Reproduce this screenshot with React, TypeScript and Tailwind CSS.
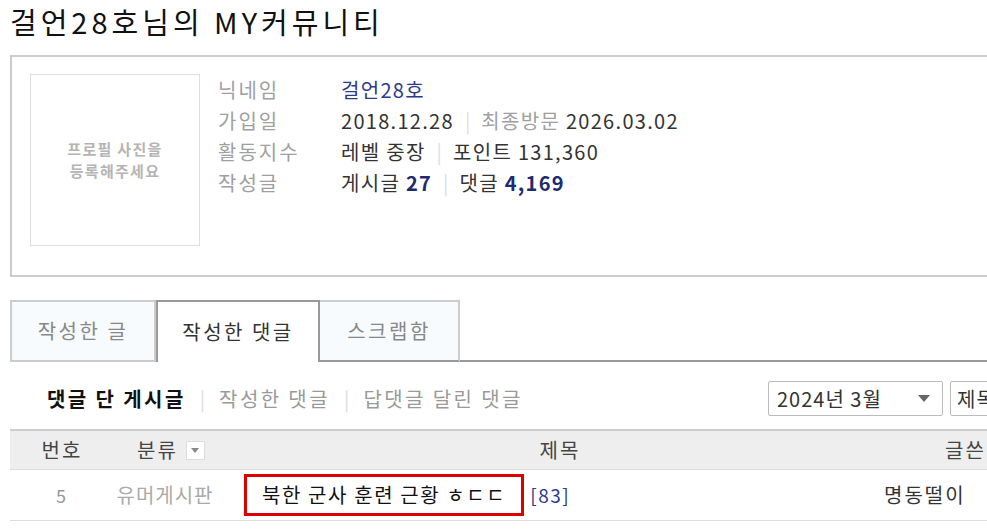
export default function App() {
  const sep = <span className="mx-[11px] tracking-normal text-[#ddd]">|</span>;
  const navSep = <span className="mx-[14px] tracking-normal text-[#ddd]">|</span>;
  return (
    <div
      className="w-[987px] h-[530px] overflow-hidden bg-white pl-[10px] text-[20px] text-[#333]"
      style={{ fontFamily: '"Noto Sans CJK KR", "Noto Sans", sans-serif' }}
    >
      {/* page title */}
      <h1 className="h-[55px] text-[29px] leading-[42px] font-normal tracking-[4px] text-[#111]">
        걸언28호님의 MY커뮤니티
      </h1>

      {/* profile */}
      <div className="flex w-[1000px] h-[222px] border-2 border-[#ccc] pl-[18px] pt-[17px]">
        <div className="flex h-[172px] w-[170px] flex-col items-center justify-center border border-[#ddd] text-[15px] font-bold leading-[22px] tracking-[1.3px] text-[#b4b4b4]">
          <span>프로필 사진을</span>
          <span>등록해주세요</span>
        </div>
        <div className="ml-[18px] leading-[31px] tracking-[1.3px]">
          <div className="flex">
            <span className="w-[123px] tracking-[2px] text-[#a0a0a0]">닉네임</span>
            <span className="text-[#2b3a8c]">걸언28호</span>
          </div>
          <div className="flex">
            <span className="w-[123px] tracking-[2px] text-[#a0a0a0]">가입일</span>
            <span>
              2018.12.28{sep}
              <span className="text-[#a0a0a0]">최종방문</span> 2026.03.02
            </span>
          </div>
          <div className="flex">
            <span className="w-[123px] tracking-[2px] text-[#a0a0a0]">활동지수</span>
            <span>
              레벨 중장{sep}포인트 131,360
            </span>
          </div>
          <div className="flex">
            <span className="w-[123px] tracking-[2px] text-[#a0a0a0]">작성글</span>
            <span>
              게시글 <b className="text-[#1f2a70]">27</b>
              {sep}댓글 <b className="text-[#1f2a70]">4,169</b>
            </span>
          </div>
        </div>
      </div>

      {/* tabs */}
      <div className="mt-[23px] flex h-[62px] w-[1000px] tracking-[2.5px]">
        <div className="flex w-[146px] items-center justify-center border-2 border-[#ccc] bg-[#f7fbfd] text-[#888]">
          작성한 글
        </div>
        <div className="flex w-[164px] items-center justify-center border-2 border-b-0 border-[#999] bg-white text-[#333]">
          작성한 댓글
        </div>
        <div className="flex w-[140px] items-center justify-center border-2 border-l-0 border-[#ccc] border-b-[#999] bg-[#f7fbfd] text-[#888]">
          스크랩함
        </div>
        <div className="flex-1 border-b-2 border-[#999]" />
      </div>

      {/* sub nav + filters */}
      <div className="mt-[19px] flex h-[35px] w-[1000px] items-center">
        <div className="flex items-center pl-[37px] tracking-[2.4px]">
          <span className="font-bold text-[#111]">댓글 단 게시글</span>
          {navSep}
          <span className="text-[#999]">작성한 댓글</span>
          {navSep}
          <span className="text-[#999]">답댓글 달린 댓글</span>
        </div>
        <div className="ml-auto flex h-full gap-[7px] tracking-[1px]">
          <div className="flex w-[175px] items-center justify-between rounded-[2px] border border-[#bbb] pl-[8px] pr-[12px] text-[#333]">
            <span>2024년 3월</span>
            <svg width="12" height="7" viewBox="0 0 12 7">
              <path d="M0 0h12L6 7z" fill="#666" />
            </svg>
          </div>
          <div className="flex w-[60px] items-center rounded-[2px] border border-[#bbb] pl-[6px] text-[#333]">
            제목
          </div>
        </div>
      </div>

      {/* table */}
      <div className="mt-[13px] w-[1000px] tracking-[2px]">
        <div className="flex h-[41px] items-center border-t-2 border-b border-t-[#ccc] border-b-[#ddd] bg-[#eee] text-[#444]">
          <div className="w-[104px] text-center">번호</div>
          <div className="flex w-[102px] items-center justify-center gap-[8px] pl-[12px]">
            분류
            <span className="flex h-[19px] w-[19px] items-center justify-center border border-[#ddd] bg-white">
              <svg width="8" height="5" viewBox="0 0 8 5">
                <path d="M0 0h8L4 5z" fill="#888" />
              </svg>
            </span>
          </div>
          <div className="w-[644px] pl-[44px] text-center">제목</div>
          <div className="flex-1 pl-[85px]">글쓴이</div>
        </div>
        <div className="flex h-[51px] items-center border-b border-[#ddd]">
          <div className="w-[104px] text-center text-[18px] text-[#999]">5</div>
          <div className="w-[102px] text-center tracking-[1px] text-[#aaa]">유머게시판</div>
          <div className="flex w-[644px] items-center pl-[28px]">
            <span className="flex h-[42px] items-center border-[3px] border-[#d00] px-[15px] tracking-[1.6px] text-[#111]">
              북한 군사 훈련 근황 ㅎㄷㄷ
            </span>
            <span className="ml-[6px] text-[19px] tracking-[1.5px] text-[#2b3a8c]">[83]</span>
          </div>
          <div className="flex-1 pl-[24px] text-[#333]">명동떨이</div>
        </div>
      </div>
    </div>
  );
}
